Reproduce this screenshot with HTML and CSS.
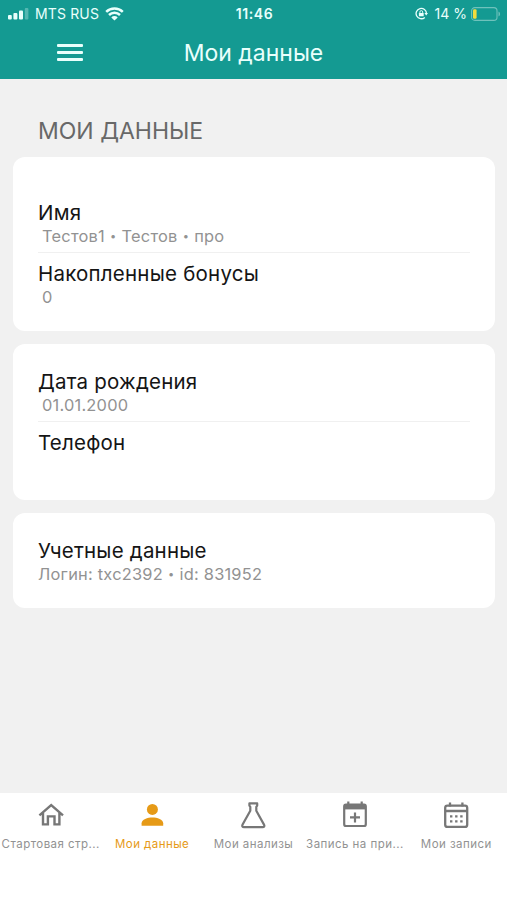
FILE: index.html
```
<!DOCTYPE html>
<html lang="ru">
<head>
  <meta charset="UTF-8">
  <title>Мои данные</title>
  <link rel="stylesheet" href="styles.css">
</head>
<body>
  <header class="header">
    <div class="status-bar">
      <div class="status-left">
        <svg class="signal" width="21" height="12" viewBox="0 0 21 12">
          <rect x="0" y="7" width="3.8" height="4.5" rx="1"/>
          <rect x="5.4" y="5" width="4" height="6.5" rx="1"/>
          <rect x="11" y="2.4" width="4" height="9.1" rx="1"/>
          <rect x="16.8" y="0" width="3.6" height="11.5" rx="1" opacity="0.3"/>
        </svg>
        <span class="carrier">MTS RUS</span>
        <svg class="wifi" width="19" height="14" viewBox="0 0 19 14">
          <path d="M1.2 4.9a12 12 0 0 1 16.6 0M4 8a8 8 0 0 1 11 0" fill="none" stroke="currentColor" stroke-width="2.5"/>
          <path d="M9.5 13.6L6.3 10.4a4.6 4.6 0 0 1 6.4 0z" fill="currentColor"/>
        </svg>
      </div>
      <span class="time">11:46</span>
      <div class="status-right">
        <svg class="lock" width="13" height="13" viewBox="0 0 13 13">
          <path d="M11.5 6.5A5.2 5.2 0 1 0 9.8 10.4" fill="none" stroke="currentColor" stroke-width="1.3"/>
          <path d="M9.4 6h3.6l-1.8 2.4z" fill="currentColor"/>
          <rect x="3.9" y="6" width="4.8" height="3.3" rx="0.5" fill="currentColor"/>
          <path d="M4.9 6V5a1.4 1.4 0 0 1 2.8 0v1" fill="none" stroke="currentColor" stroke-width="0.9"/>
        </svg>
        <span class="percent">14 %</span>
        <svg class="battery" width="30" height="14" viewBox="0 0 30 14">
          <rect x="0.6" y="0.6" width="25.4" height="12.8" rx="3.2" fill="none" stroke="#6fc2bc" stroke-width="1.1"/>
          <rect x="2" y="2.2" width="3.6" height="9.6" rx="1.3" fill="#f2dc3c"/>
          <path d="M27.5 4.6a2.6 2.6 0 0 1 0 4.8z" fill="#6fc2bc"/>
        </svg>
      </div>
    </div>
    <div class="nav-bar">
      <button class="menu-btn" aria-label="Меню">
        <span></span>
        <span></span>
        <span></span>
      </button>
      <h1>Мои данные</h1>
    </div>
  </header>

  <main class="content">
    <h2>МОИ ДАННЫЕ</h2>

    <section class="card card-first">
      <div class="item">
        <div class="item-title">Имя</div>
        <div class="item-value indent">Тестов1 <span class="dot">•</span> Тестов <span class="dot">•</span> про</div>
      </div>
      <div class="item">
        <div class="item-title">Накопленные бонусы</div>
        <div class="item-value indent">0</div>
      </div>
    </section>

    <section class="card">
      <div class="item">
        <div class="item-title">Дата рождения</div>
        <div class="item-value indent">01.01.2000</div>
      </div>
      <div class="item">
        <div class="item-title">Телефон</div>
        <div class="item-value"></div>
      </div>
    </section>

    <section class="card">
      <div class="item">
        <div class="item-title">Учетные данные</div>
        <div class="item-value">Логин: txc2392 <span class="dot">•</span> id: 831952</div>
      </div>
    </section>
  </main>

  <nav class="tab-bar">
    <a class="tab">
      <svg width="28" height="28" viewBox="0 0 28 28" fill="none" stroke="currentColor" stroke-width="2.4">
        <path d="M2.4 14.4L14.2 4.2 26 14.4M6 11.6v11.8h4.9v-8h6.6v8h4.9V11.6"/>
      </svg>
      <span>Стартовая стр...</span>
    </a>
    <a class="tab active">
      <svg width="28" height="28" viewBox="0 0 28 28" fill="currentColor">
        <circle cx="14.4" cy="8.4" r="5.5"/>
        <path d="M3.6 24.8v-2.6c0-3.8 6-5.8 10.8-5.8s10.8 2 10.8 5.8v2.6z"/>
      </svg>
      <span>Мои данные</span>
    </a>
    <a class="tab">
      <svg width="28" height="28" viewBox="0 0 28 28" fill="none" stroke="currentColor" stroke-width="2.2" stroke-linejoin="round">
        <path d="M10.4 2.4h7.8v2.2l-.9 1.2v4l7.7 13.8c.8 1.5.2 2.6-1.4 2.6H5c-1.6 0-2.2-1.1-1.4-2.6l7.7-13.8v-4l-.9-1.2z"/>
      </svg>
      <span>Мои анализы</span>
    </a>
    <a class="tab">
      <svg width="28" height="28" viewBox="0 0 28 28" fill="none" stroke="currentColor" stroke-width="2.2">
        <rect x="3.2" y="3.6" width="21.6" height="21.4" rx="1.8"/>
        <path d="M3 3.4h22v5H3z" fill="currentColor" stroke="none"/>
        <path d="M7.3 .6v4M20.7 .6v4M14 11.4v10M9 16.4h10"/>
      </svg>
      <span>Запись на при...</span>
    </a>
    <a class="tab">
      <svg width="28" height="28" viewBox="0 0 28 28" fill="none" stroke="currentColor" stroke-width="2.3">
        <rect x="3.2" y="4.6" width="22" height="21.3" rx="2.2"/>
        <path d="M3.2 10h22M8 1.4v4M20.4 1.4v4"/>
        <path d="M8 15.4h12.6M8 20.4h12.6" stroke-width="2.4" stroke-dasharray="2.4 2.7"/>
      </svg>
      <span>Мои записи</span>
    </a>
  </nav>
</body>
</html>
```

FILE: styles.css
```
:root {
  --accent: #149a92;
  --active: #e69a17;
  --bg: #f1f1f1;
  --gray: #929292;
}

* {
  box-sizing: border-box;
}

body {
  margin: 0;
  height: 900px;
  display: flex;
  flex-direction: column;
  font-family: Inter, "Liberation Sans", sans-serif;
  background-color: var(--bg);
  color: #151515;
  overflow: hidden;
}

.header {
  height: 79px;
  background-color: var(--accent);
  color: #e9fffc;
}

.status-bar {
  height: 27px;
  padding: 0 6px 0 8px;
  display: grid;
  grid-template-columns: 1fr auto 1fr;
  align-items: center;
  font-size: 14px;
}

.status-left,
.status-right {
  display: flex;
  align-items: center;
}

.status-right {
  justify-content: flex-end;
}

.signal {
  fill: currentColor;
}

.carrier {
  margin: 0 6px;
  letter-spacing: 0.15px;
}

.time {
  font-weight: 600;
  letter-spacing: 0.6px;
}

.percent {
  margin: 0 4px 0 7px;
}

.nav-bar {
  height: 52px;
  display: grid;
  grid-template-columns: 84px 1fr 84px;
  align-items: center;
}

.menu-btn {
  width: 26px;
  margin: -2px 0 0 57px;
  padding: 0;
  display: flex;
  flex-direction: column;
  gap: 4px;
  border: none;
  background: none;
}

.menu-btn span {
  height: 3px;
  border-radius: 1px;
  background-color: #e9fffc;
}

h1 {
  margin: 0;
  font-size: 23px;
  font-weight: 400;
  text-align: center;
}

.content {
  flex: 1;
  padding: 0 12px 0 13px;
}

h2 {
  margin: 0;
  padding: 37px 0 11px 25px;
  font-size: 23px;
  line-height: 30px;
  font-weight: 400;
  color: #686868;
}

.card {
  margin-bottom: 13px;
  padding: 17px 25px;
  border-radius: 12px;
  background-color: #fff;
}

.card-first {
  padding-top: 35px;
}

.item {
  height: 61px;
  padding-top: 8px;
}

.item:not(:last-child) {
  border-bottom: 1px solid #f0f0f0;
}

.item-title {
  font-size: 20.5px;
  line-height: 26px;
  letter-spacing: 0.22px;
}

.item-value {
  font-size: 16.4px;
  line-height: 20px;
  letter-spacing: 0.22px;
  color: var(--gray);
}

.indent {
  padding-left: 4px;
}

.dot {
  margin: 0 0.3px;
  font-size: 11px;
  vertical-align: 2px;
  line-height: 1;
}

.tab-bar {
  height: 107px;
  padding-top: 8px;
  display: grid;
  grid-template-columns: repeat(5, 1fr);
  background-color: #fff;
}

.tab {
  display: flex;
  flex-direction: column;
  align-items: center;
  gap: 7px;
  font-size: 11.5px;
  line-height: 16px;
  letter-spacing: 0.45px;
  white-space: nowrap;
  color: var(--gray);
}

.tab svg {
  color: #777;
}

.tab.active,
.tab.active svg {
  color: var(--active);
}
```
